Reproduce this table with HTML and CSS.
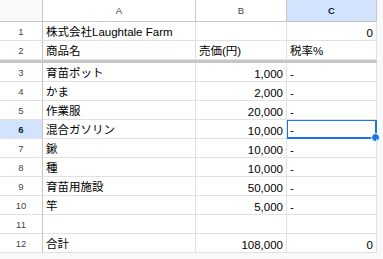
FILE: index.html
```html
<!DOCTYPE html>
<html>
	<head>
		<meta charset="utf-8">
		<meta name="viewport" content="width=device-width, initial-scale=1.0">
		<title>売価表</title>
		<link rel="stylesheet" href="styles.css">
	</head>
	<body>
		<div class="sheet">
			<!-- 列見出し -->
			<div class="corner"></div>
			<div class="colhead">A</div>
			<div class="colhead">B</div>
			<div class="colhead sel">C</div>

			<div class="rowhead">1</div>
			<div class="cell">株式会社Laughtale Farm</div>
			<div class="cell"></div>
			<div class="cell num">0</div>

			<div class="rowhead">2</div>
			<div class="cell">商品名</div>
			<div class="cell">売価(円)</div>
			<div class="cell">税率%</div>

			<!-- 固定行の区切り線 -->
			<div class="freeze"></div>

			<div class="rowhead">3</div>
			<div class="cell">育苗ポット</div>
			<div class="cell num">1,000</div>
			<div class="cell">-</div>

			<div class="rowhead">4</div>
			<div class="cell">かま</div>
			<div class="cell num">2,000</div>
			<div class="cell">-</div>

			<div class="rowhead">5</div>
			<div class="cell">作業服</div>
			<div class="cell num">20,000</div>
			<div class="cell">-</div>

			<div class="rowhead sel">6</div>
			<div class="cell">混合ガソリン</div>
			<div class="cell num">10,000</div>
			<div class="cell active">-</div>

			<div class="rowhead">7</div>
			<div class="cell">鍬</div>
			<div class="cell num">10,000</div>
			<div class="cell">-</div>

			<div class="rowhead">8</div>
			<div class="cell">種</div>
			<div class="cell num">10,000</div>
			<div class="cell">-</div>

			<div class="rowhead">9</div>
			<div class="cell">育苗用施設</div>
			<div class="cell num">50,000</div>
			<div class="cell">-</div>

			<div class="rowhead">10</div>
			<div class="cell">竿</div>
			<div class="cell num">5,000</div>
			<div class="cell">-</div>

			<div class="rowhead">11</div>
			<div class="cell"></div>
			<div class="cell"></div>
			<div class="cell"></div>

			<div class="rowhead">12</div>
			<div class="cell">合計</div>
			<div class="cell num">108,000</div>
			<div class="cell num">0</div>
		</div>
	</body>
</html>
```

FILE: styles.css
```css
* {
	padding: 0;
	margin: 0;
	box-sizing: border-box;
}

body {
	width: 383px;
	height: 259px;
	overflow: hidden;
	background-color: #f8f9fa;
	font-family: "Liberation Sans", "Noto Sans CJK JP", sans-serif;
}

.sheet {
	display: grid;
	/* 行番号 + A,B,C の3列 */
	grid-template-columns: 43px 153px 91px 90px;
	grid-template-rows: 22px 19px 19px 3px repeat(10, 19px);
	width: 377px;
	background-color: #fff;
}

.corner,
.colhead {
	background-color: #f8f9fa;
	border-right: 1px solid #c4c7c5;
	border-bottom: 1px solid #c4c7c5;
}

.colhead {
	display: flex;
	justify-content: center;
	align-items: center;
	font-size: 9.5px;
	color: #444746;
	background-color: #fff;
}

.rowhead {
	display: flex;
	justify-content: center;
	align-items: center;
	font-size: 9.5px;
	color: #444746;
	background-color: #fff;
	border-right: 1px solid #c4c7c5;
	border-bottom: 1px solid #e1e1e1;
}

/* 選択中の行・列の見出し */
.colhead.sel,
.rowhead.sel {
	background-color: #d3e3fd;
	color: #0b1f45;
	font-weight: bold;
}

.cell {
	position: relative;
	display: flex;
	align-items: flex-end;
	padding: 0 3px 1px 3px;
	font-size: 11.5px;
	color: #000;
	white-space: nowrap;
	border-right: 1px solid #e1e1e1;
	border-bottom: 1px solid #e1e1e1;
}

.cell.num {
	justify-content: flex-end;
}

.freeze {
	grid-column: 1 / -1;
	background-color: #c4c7c5;
}

/* アクティブセルの枠と右下のハンドル */
.cell.active {
	border: 2px solid #1a73e8;
	border-top-width: 1px;
	border-left-width: 1px;
	padding-left: 2px;
}

.cell.active::after {
	content: "";
	position: absolute;
	right: -5px;
	bottom: -5px;
	width: 7px;
	height: 7px;
	border-radius: 50%;
	background-color: #1a73e8;
	border: 1px solid #fff;
}
```
